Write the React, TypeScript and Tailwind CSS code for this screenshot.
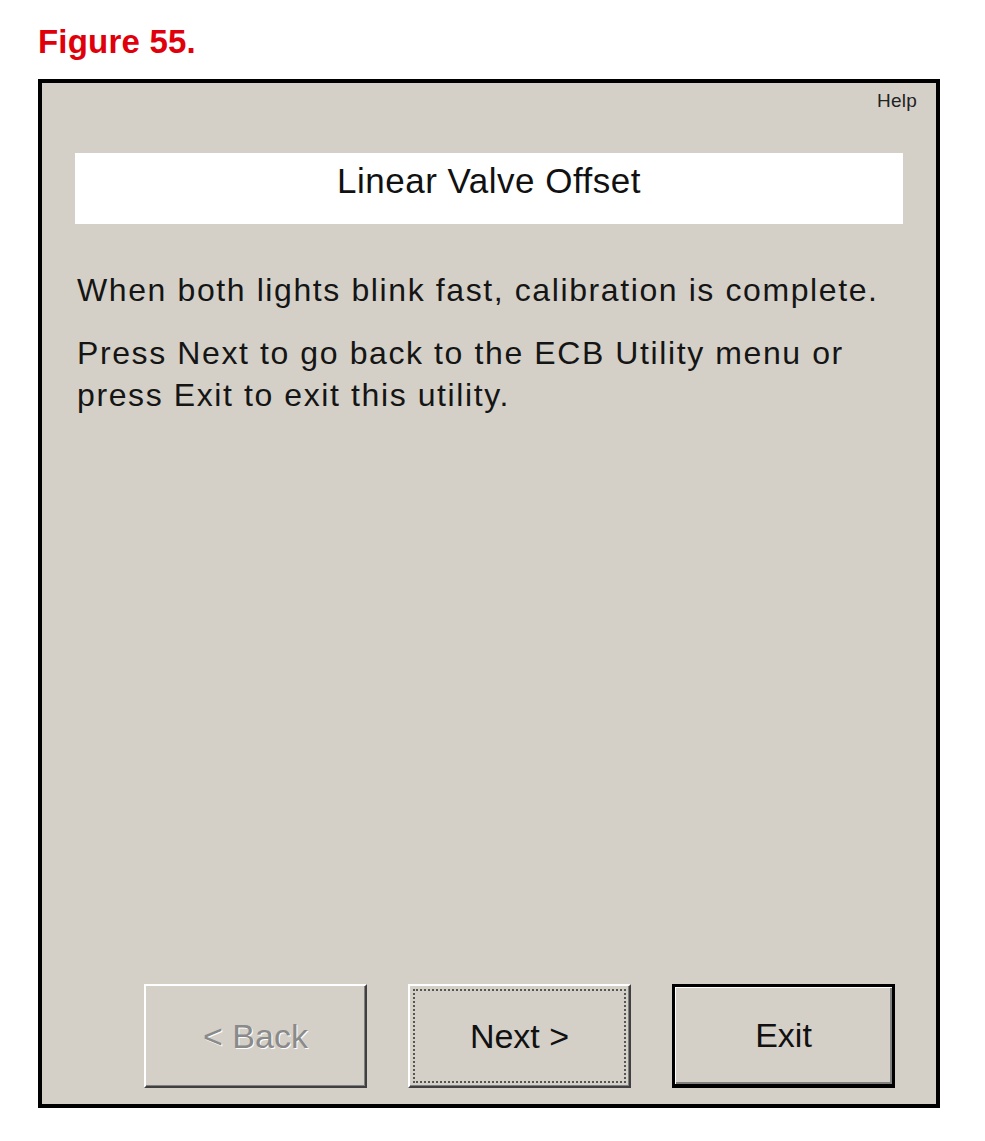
const font = { fontFamily: '"Liberation Sans", Arial, sans-serif' };

const App = () => {
  return (
    <div className="min-h-[1141px] w-[985px] bg-white pl-[38px] pt-[24px]" style={font}>
      <h1 className="text-[33px] leading-[36px] font-bold tracking-[0.2px] text-[#e0000b]">Figure 55.</h1>

      <div className="mt-[19px] flex h-[1029px] w-[902px] flex-col border-4 border-black bg-[#d4d0c8]">
        {/* Help link */}
        <div className="flex justify-end pr-[19px] pt-[8px]">
          <span className="text-[19px] leading-[20px] tracking-[0.2px] text-[#222]">Help</span>
        </div>

        {/* Title */}
        <div className="mx-[33px] mt-[42px] h-[71px] bg-white pt-[8px] text-center">
          <span className="text-[35px] leading-[40px] tracking-[0.5px] text-[#111]">Linear Valve Offset</span>
        </div>

        {/* Body */}
        <div className="px-[35px] text-[32px] tracking-[1.6px] text-[#151515] whitespace-nowrap">
          <p className="mt-[46px] leading-[40px]">When both lights blink fast, calibration is complete.</p>
          <p className="mt-[22px] leading-[42px]">
            Press Next to go back to the ECB Utility menu or
            <br />
            press Exit to exit this utility.
          </p>
        </div>

        <div className="flex-1" />

        {/* Buttons */}
        <div className="mb-[16px] flex justify-end gap-[41px] pr-[41px]">
          <button className="flex h-[104px] w-[223px] items-center justify-center border-2 border-t-white border-l-white border-b-[#404040] border-r-[#404040] bg-[#d4d0c8] shadow-[inset_-1px_-1px_0_#808080]">
            <span className="text-[34px] text-[#8a8a8a] [text-shadow:1px_1px_0_#ffffff]">&lt; Back</span>
          </button>
          <button className="flex h-[104px] w-[223px] border-2 border-t-white border-l-white border-b-[#404040] border-r-[#404040] bg-[#d4d0c8] p-[3px] shadow-[inset_-1px_-1px_0_#808080]">
            <div className="flex flex-1 items-center justify-center border-2 border-dotted border-[#555]">
              <span className="text-[34px] text-[#111]">Next &gt;</span>
            </div>
          </button>
          <button className="flex h-[104px] w-[223px] items-center justify-center border-[3px] border-b-4 border-black bg-[#d4d0c8] shadow-[inset_1px_1px_0_#ffffff,inset_-2px_-2px_0_#808080]">
            <span className="text-[34px] text-[#111]">Exit</span>
          </button>
        </div>
      </div>
    </div>
  );
};

export default App;
